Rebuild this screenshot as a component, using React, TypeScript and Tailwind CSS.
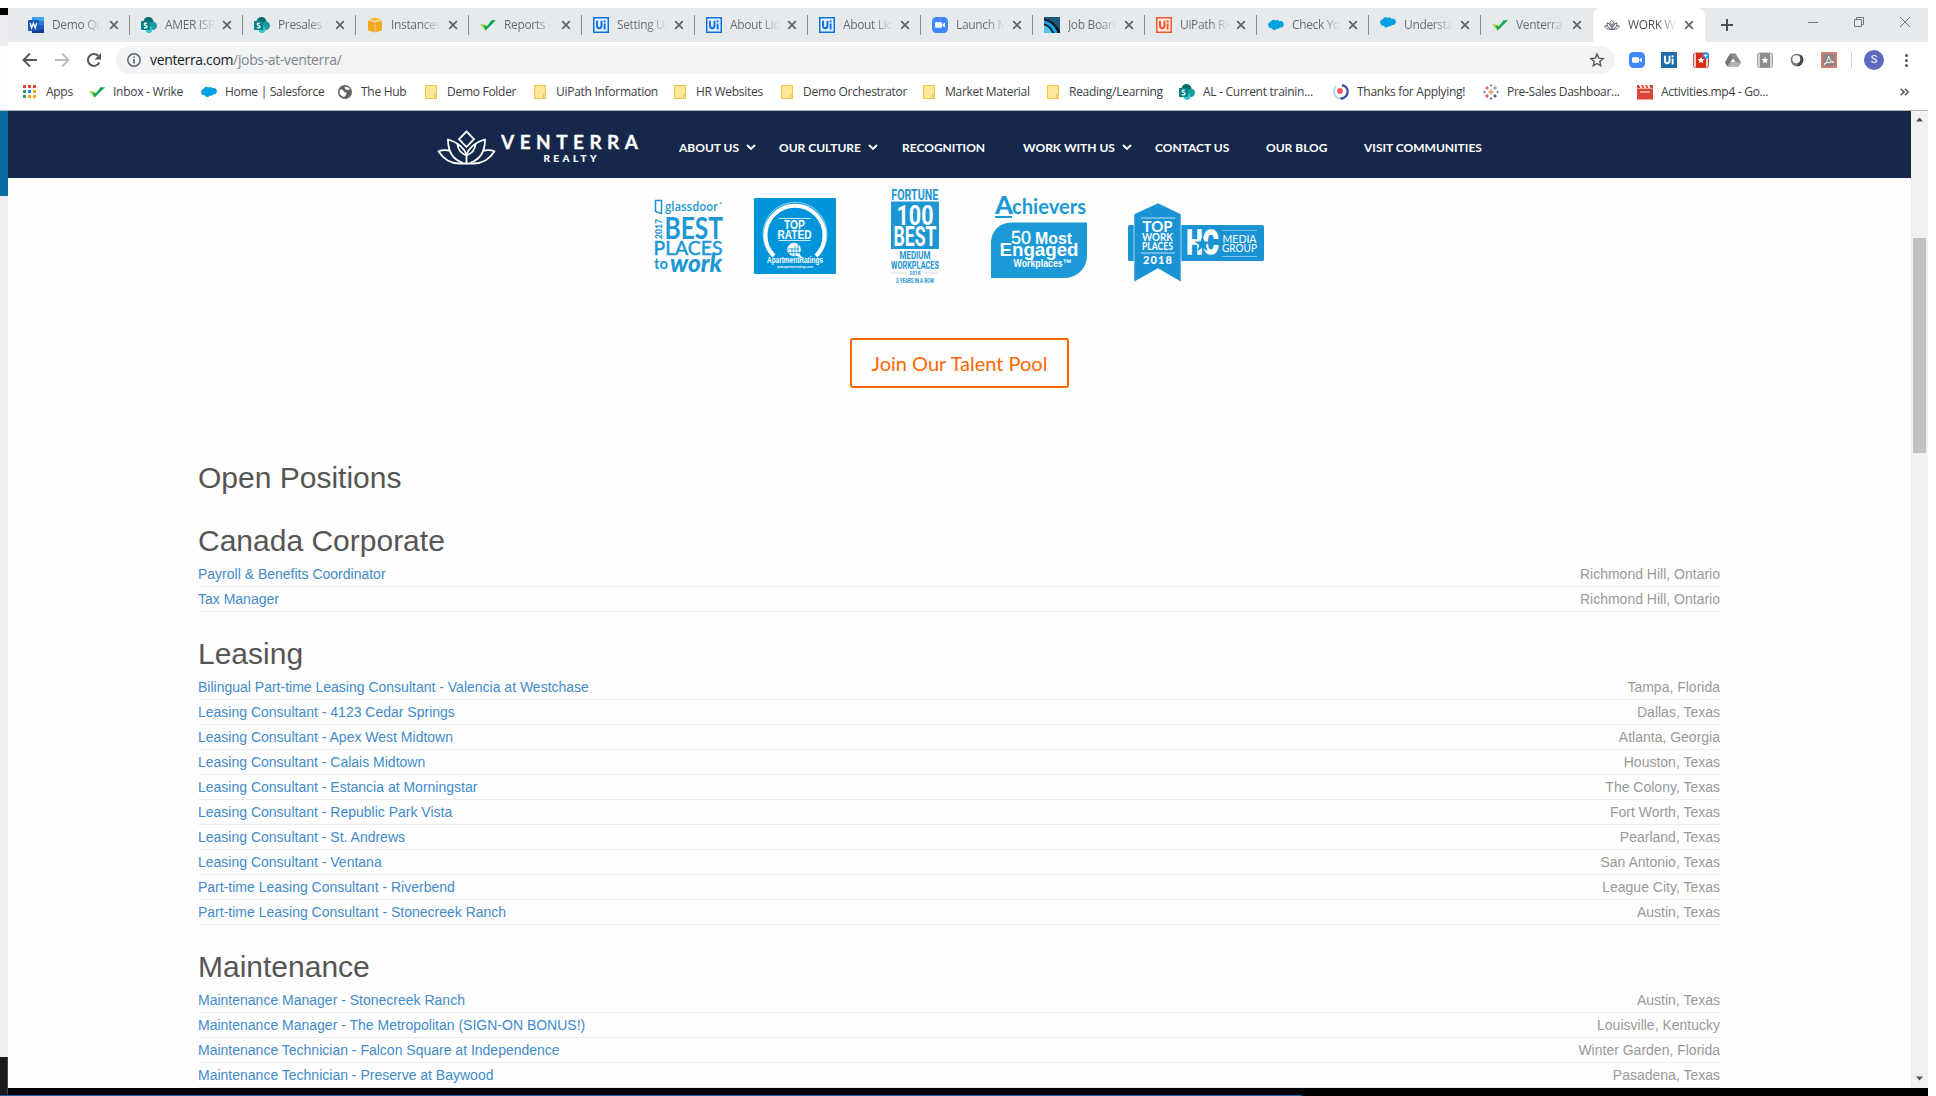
import React from "react";

const UI = "font-['Open_Sans','Noto_Sans',sans-serif]";

/* ---------- small icons ---------- */

const WordIcon = () => (
  <svg width="16" height="16" viewBox="0 0 16 16">
    <path fill="#41a5ee" d="M4 0h12v4H4z" />
    <path fill="#2b7cd3" d="M4 4h12v4H4z" />
    <path fill="#185abd" d="M4 8h12v4H4z" />
    <path fill="#103f91" d="M4 12h12v4H4z" />
    <rect x="0" y="3" width="11" height="11" rx="1" fill="#185abd" />
    <path d="M2.2 6l1.4 5 1.8-4.8L7.2 11l1.5-5" fill="none" stroke="#fff" strokeWidth="1.3" />
  </svg>
);

const SharePointIcon = () => (
  <svg width="16" height="16" viewBox="0 0 16 16">
    <circle cx="7.5" cy="5" r="5" fill="#036c70" />
    <circle cx="11.8" cy="8.8" r="4.2" fill="#1a9ba1" />
    <circle cx="8" cy="12.6" r="3.4" fill="#37c6d0" />
    <rect x="0" y="4" width="9" height="9" rx="0.8" fill="#038387" />
    <path d="M6 6.6C5 5.9 3.2 6 3.2 7.2c0 1.300 2.900 1 2.900 2.500 0 1.300-2 1.400-3.200.7" fill="none" stroke="#fff" strokeWidth="1.200" />
  </svg>
);

const BoxIcon = () => (
  <svg width="16" height="16" viewBox="0 0 16 16">
    <path fill="#f6a81f" d="M1 3.500L7.700 5v10.500L1 13.500zM15 3.500L8.300 5v10.500l6.700-2z" />
    <path fill="#f8b93c" d="M8 .6l6.500 1.900L8 4.200 1.500 2.500z" />
    <path d="M1 3.200L8 4.800l7-1.600" stroke="#fbdc9d" strokeWidth=".7" fill="none" />
  </svg>
);

const WrikeIcon = () => (
  <svg width="16" height="16" viewBox="0 0 16 16">
    <path fill="#a4d13a" d="M0 7.200l4.500.4 3.200 3.600-2.200 2.300z" />
    <path fill="#08a850" d="M16 3.200h-4.500L6.800 9.500 5.200 8.200 4 9l1.500 4.500z" />
  </svg>
);

const UiIcon = ({ kind }: { kind: "blue" | "orange" | "solid" }) => {
  const c = kind === "orange" ? "#f9562b" : kind === "blue" ? "#0f6fde" : "#1f6bb0";
  return (
    <svg width="16" height="16" viewBox="0 0 16 16">
      <rect width="16" height="16" fill={c} />
      {kind !== "solid" && <rect x="1.500" y="1.500" width="13" height="13" fill={kind === "orange" ? "#ffe9e2" : "#e6f1fd"} />}
      <path
        d="M4 3.800v5c0 3.200 4.500 3.200 4.500 0v-5M11.600 6.500v6"
        fill="none"
        stroke={kind === "solid" ? "#fff" : c}
        strokeWidth="1.900"
      />
      <rect x="10.600" y="3.400" width="2" height="1.900" fill={kind === "solid" ? "#fff" : c} />
    </svg>
  );
};

const ZoomIcon = () => (
  <svg width="16" height="16" viewBox="0 0 16 16">
    <rect width="16" height="16" rx="4.500" fill="#4087fc" />
    <rect x="3" y="5.200" width="7" height="5.600" rx="1.200" fill="#fff" />
    <path d="M10.500 7.300L13 5.400v5.200l-2.500-1.900z" fill="#fff" />
  </svg>
);

const JobBoardIcon = () => (
  <svg width="16" height="16" viewBox="0 0 16 16">
    <rect width="16" height="16" fill="#1c5878" />
    <path d="M0 1.500C8 3 13 8 16 14v2H0z" fill="#111c2a" />
    <path d="M0 3.500C7 5 11.500 10 13.500 16H0z" fill="#1ca4e8" />
    <path d="M0 6.500C5 7.500 8.500 11.500 10 16H8C6.500 12.500 4 9.500 0 8.500z" fill="#111c2a" />
    <path d="M0 8.500c4 1 6.500 4 8 7.500H0z" fill="#56c5f5" />
  </svg>
);

const CloudIcon = ({ up = false }: { up?: boolean }) => (
  <svg width="16" height="16" viewBox="0 0 16 16">
    <path
      transform={up ? "translate(0 -2.500)" : undefined}
      fill="#00a1e0"
      d="M3.200 4c1-1.400 3-1.500 4.100-.4 1-1 3.100-1 4 .6 2-.8 4.600.5 4.600 3 0 2.300-2 3.600-4 3.200-.8 1.400-2.300 1.600-3.300 1C7.600 13.800 4.700 13.600 3.900 11.200 1.800 11.500.1 10 .1 7.900c0-1.700 1-2.700 2.200-3z"
    />
  </svg>
);

const Lotus = ({ w, h, color, sw }: { w: number; h: number; color: string; sw: number }) => (
  <svg width={w} height={h} viewBox="0 0 59 35">
    <g fill="none" stroke={color} strokeWidth={sw} strokeLinejoin="round" strokeLinecap="round">
      <path d="M29.500 1.500L37 9.200 29.500 17 22 9.200z" />
      <path d="M29.500 33.500V24.500C28 20 22 12.500 11 9.500c0 9 3 19 14 23" />
      <path d="M29.500 24.500C31 20 37 12.500 48 9.500c0 9-3 19-14 23" />
      <path d="M20.500 14.500c.5 5 4 9 9 11 5-2 8.500-6 9-11" />
      <path d="M11.800 20.500C8 20 4 20.300 1.500 21.300c5 8 11 12.200 21 12.200h14c10 0 16-4.200 21-12.200-2.500-1-6.500-1.300-10.300-.8" />
    </g>
  </svg>
);

const FolderIcon = () => (
  <svg width="16" height="16" viewBox="0 0 16 16">
    <path d="M2.500 1.500h11v13h-11z" fill="#ffe79a" stroke="#ecc54c" />
    <path d="M11.500 14.500v-4h2v4z" fill="#ffe79a" stroke="#ecc54c" />
  </svg>
);

const AppsIcon = () => (
  <svg width="16" height="16" viewBox="0 0 16 16">
    {["#ea4335", "#ea4335", "#ea4335", "#34a05f", "#1a85ff", "#f6a609", "#34a05f", "#f6a609", "#f6a609"].map((c, i) => (
      <rect key={i} x={1 + (i % 3) * 5} y={1 + Math.floor(i / 3) * 5} width="3" height="3" fill={c} />
    ))}
  </svg>
);

const GlobeIcon = () => (
  <svg width="16" height="16" viewBox="0 0 16 16">
    <circle cx="8" cy="8" r="7" fill="#5f6368" />
    <path d="M3 5.500c2-.3 3.500.4 3.500 1.600S9 8 9.500 9.200 8 11.500 7.500 13c-2.800 0-5-2.500-5-5.200zM8 2.800c2-.6 4 .8 4.900 2.400-1 .8-2.500 1.200-3.600.4S7 4 8 2.800z" fill="#fff" />
  </svg>
);

const TargetIcon = () => (
  <svg width="16" height="16" viewBox="0 0 16 16">
    <path d="M3 2.500C-1 7 1 14 8 14.500" fill="none" stroke="#a9dbe8" strokeWidth="2" />
    <path d="M9 1.200C17 2.500 16.500 13.500 7.500 14.800" fill="none" stroke="#3f51a3" strokeWidth="2.400" />
    <circle cx="7" cy="7" r="3" fill="#ff5468" />
  </svg>
);

const TableauIcon = () => (
  <svg width="16" height="16" viewBox="0 0 16 16">
    <g strokeWidth="1.100" fill="none">
      <path d="M8 5.300v5.400M5.300 8h5.400" stroke="#e8762d" />
      <path d="M4 2.200v3.600M2.200 4h3.600" stroke="#c9503f" />
      <path d="M12 2.200v3.600M10.200 4h3.600" stroke="#5b8db8" />
      <path d="M4 10.200v3.600M2.200 12h3.600" stroke="#c0334d" />
      <path d="M12 10.200v3.600M10.200 12h3.600" stroke="#1f447e" />
      <path d="M8 .2v2.600M6.700 1.500h2.600" stroke="#6b98a8" />
      <path d="M8 13.200v2.600M6.700 14.500h2.600" stroke="#59659a" />
      <path d="M1.500 6.700v2.600M.2 8h2.600M14.500 6.700v2.600M13.200 8h2.600" stroke="#7187b4" />
    </g>
  </svg>
);

const ClapIcon = () => (
  <svg width="16" height="16" viewBox="0 0 16 16">
    <path d="M0 4.500h16V15.500H0z" fill="#db4437" />
    <path d="M0 1h2l1.500 3H0zM4 1h2l1.500 3h-2zM8 1h2l1.500 3h-2zM12 1h4v3h-2.500z" fill="#db4437" />
    <path d="M3 8h10" stroke="#fff" strokeWidth="1" />
  </svg>
);

const BookIcon = ({ red = false }: { red?: boolean }) => (
  <svg width="16" height="16" viewBox="0 0 16 16">
    <rect x=".5" y="1" width="15" height="14.500" rx="2" fill={red ? "#e7d3cc" : "#d4d4d4"} stroke={red ? "#c9573f" : "#a6a6a6"} />
    <rect x="3" y="1" width="10" height="14.500" fill={red ? "#dd2c10" : "#8d8d8d"} />
    <path d="M8 4.800l1 2.300 2.400.2-1.800 1.600.5 2.400L8 10l-2.100 1.300.5-2.400-1.800-1.600 2.400-.2z" fill="#fff" />
    {red && (
      <>
        <circle cx="12.700" cy="3.500" r="3.300" fill="#2a8be6" />
        <path d="M12.700 1.700v3.600M10.900 3.500h3.600" stroke="#fff" strokeWidth="1.200" />
      </>
    )}
  </svg>
);

const DriveIcon = () => (
  <svg width="16" height="16" viewBox="0 0 16 16">
    <path d="M5.300 1.500h5.200L16 10.500l-2.500 4h-11L0 10.500z" fill="#8b8b8b" />
    <path d="M5.300 1.500L8 6 2.500 14.500 0 10.500z" fill="#757575" />
    <path d="M5.500 10.300L8 6.200l2.500 4.100z" fill="#fff" />
    <path d="M5.200 10.300H16l-2.500 4.200h-11z" fill="#b0b0b0" />
  </svg>
);

const OrbIcon = () => (
  <svg width="16" height="16" viewBox="0 0 16 16">
    <circle cx="8" cy="8" r="6.300" fill="#777" />
    <path d="M8 14.300A6.300 6.300 0 0 0 14.300 8c0-2-.8-4-2.600-5.200z" fill="#444" />
    <circle cx="7.300" cy="7.300" r="4" fill="#f5f5f5" />
  </svg>
);

const PdfIcon = () => (
  <svg width="16" height="16" viewBox="0 0 16 16">
    <rect x=".75" y=".75" width="14.500" height="14.500" fill="#8e8684" stroke="#ec7a6c" strokeWidth="1.500" />
    <path d="M3 12.500c2-1 4.500-5 4.700-8.500.8 3.500 2.800 6.200 5.300 6.200-3.500-.4-7 .2-10 2.300z" fill="none" stroke="#fff" strokeWidth="1" />
  </svg>
);

const Close = () => (
  <svg width="10" height="10" viewBox="0 0 10 10">
    <path d="M1.200 1.200l7.600 7.600M8.800 1.200L1.200 8.800" stroke="#5f6368" strokeWidth="1.700" />
  </svg>
);

/* ---------- browser chrome ---------- */

type TabData = { icon: React.ReactNode; label: string; narrow?: boolean; sep?: boolean };

const tabs: TabData[] = [
  { icon: <WordIcon />, label: "Demo Quest", sep: true },
  { icon: <SharePointIcon />, label: "AMER ISR T", sep: true },
  { icon: <SharePointIcon />, label: "Presales Co", sep: true },
  { icon: <BoxIcon />, label: "Instances |", sep: true },
  { icon: <WrikeIcon />, label: "Reports - W", sep: true },
  { icon: <UiIcon kind="blue" />, label: "Setting Up", sep: true },
  { icon: <UiIcon kind="blue" />, label: "About Licen", sep: true },
  { icon: <UiIcon kind="blue" />, label: "About Licen", sep: true },
  { icon: <ZoomIcon />, label: "Launch Me", narrow: true, sep: true },
  { icon: <JobBoardIcon />, label: "Job Board", narrow: true, sep: true },
  { icon: <UiIcon kind="orange" />, label: "UiPath RPA", narrow: true, sep: true },
  { icon: <CloudIcon />, label: "Check You", narrow: true, sep: true },
  { icon: <CloudIcon up />, label: "Understand", narrow: true, sep: true },
  { icon: <WrikeIcon />, label: "Venterra R", narrow: true },
];

const TabBody = ({
  icon,
  label,
  narrow = false,
  active = false,
}: {
  icon: React.ReactNode;
  label: string;
  narrow?: boolean;
  active?: boolean;
}) => (
  <>
    <span className="shrink-0">{icon}</span>
    <span
      className={
        "ml-2 shrink-0 overflow-hidden bg-clip-text text-xs tracking-[-0.35px] whitespace-nowrap text-transparent " +
        (narrow ? "w-[49px] " : "w-[50px] ") +
        (active
          ? "bg-linear-to-r from-[#45494d] from-60% to-white"
          : "bg-linear-to-r from-[#65696d] from-60% to-[#e7eaed]")
      }
    >
      {label}
    </span>
    <span className="ml-[7px] shrink-0">
      <Close />
    </span>
  </>
);

const TabStrip = () => (
  <div className="flex h-[34px] items-center bg-[#e7eaed] pl-[9px]">
    {tabs.map((t, i) => (
      <div key={i} className={"relative flex h-full shrink-0 items-center pl-[11px] " + (t.narrow ? "w-[112px]" : "w-[113px]")}>
        <TabBody icon={t.icon} label={t.label} narrow={t.narrow} />
        {t.sep && <span className="absolute top-[7px] right-0 h-5 w-px bg-[#888c91]" />}
      </div>
    ))}
    <div className="flex h-full w-[112px] shrink-0 items-center rounded-t-lg bg-white pl-[11px]">
      <TabBody icon={<Lotus w={16} h={10} color="#38465f" sw={3} />} label="WORK WITH" narrow active />
    </div>
    <svg className="ml-4" width="12" height="12" viewBox="0 0 12 12">
      <path d="M6 0v12M0 6h12" stroke="#4d5156" strokeWidth="2" />
    </svg>
    <svg className="mt-[-6px] ml-auto" width="10" height="10" viewBox="0 0 10 10">
      <path d="M0 5.500h10" stroke="#777" />
    </svg>
    <svg className="mt-[-6px] ml-9" width="10" height="10" viewBox="0 0 10 10">
      <path d="M.5 2.500h7v7h-7zM2.500 2.500v-2h7v7h-2" fill="none" stroke="#777" />
    </svg>
    <svg className="mt-[-6px] mr-[18px] ml-9" width="10" height="10" viewBox="0 0 10 10">
      <path d="M0 0l10 10M10 0L0 10" stroke="#777" />
    </svg>
  </div>
);

const extensions: React.ReactNode[] = [
  <ZoomIcon />,
  <UiIcon kind="solid" />,
  <BookIcon red />,
  <DriveIcon />,
  <BookIcon />,
  <OrbIcon />,
  <PdfIcon />,
];

const Toolbar = () => (
  <div className="flex h-9 items-center pl-[14px]">
    <svg width="16" height="16" viewBox="0 0 16 16">
      <path d="M15 8H2M8 1.500L1.500 8 8 14.500" fill="none" stroke="#54585c" strokeWidth="1.900" />
    </svg>
    <svg className="ml-4" width="16" height="16" viewBox="0 0 16 16">
      <path d="M1 8h13M8 1.500L14.500 8 8 14.500" fill="none" stroke="#babcbe" strokeWidth="1.900" />
    </svg>
    <svg className="ml-4" width="16" height="16" viewBox="0 0 16 16">
      <path d="M13.300 10.500A6 6 0 1 1 12.300 3.800" fill="none" stroke="#54585c" strokeWidth="2" />
      <path d="M15 1v6.500H8.500z" fill="#54585c" />
    </svg>
    <div className="ml-[14px] flex h-7 w-[1499px] items-center rounded-full bg-[#f1f3f4] pr-[10px] pl-[11px]">
      <svg width="14" height="14" viewBox="0 0 14 14">
        <circle cx="7" cy="7" r="6.200" fill="none" stroke="#5f6368" strokeWidth="1.500" />
        <path d="M7 6v4.500M7 3.500v1.600" stroke="#5f6368" strokeWidth="1.600" />
      </svg>
      <span className="ml-[9px] text-sm tracking-[-0.35px] text-[#202124]">
        venterra.com<span className="text-[#80868b]">/jobs-at-venterra/</span>
      </span>
      <svg className="ml-auto" width="16" height="16" viewBox="0 0 16 16">
        <path d="M8 2l1.700 4.100 4.500.4-3.400 2.900 1 4.400L8 11.500l-3.800 2.300 1-4.400L1.800 6.500l4.500-.4z" fill="none" stroke="#54585c" strokeWidth="1.400" />
      </svg>
    </div>
    <div className="ml-[14px] flex gap-4">
      {extensions.map((e, i) => (
        <span key={i}>{e}</span>
      ))}
    </div>
    <span className="ml-[14px] h-4 w-px bg-[#cfd1d4]" />
    <span className="ml-3 flex size-5 items-center justify-center rounded-full bg-[#5c6bc0] font-[Roboto,sans-serif] text-[11px] text-white">S</span>
    <span className="ml-[21px] flex flex-col gap-[2px]">
      <i className="size-[3px] rounded-full bg-[#54585c]" />
      <i className="size-[3px] rounded-full bg-[#54585c]" />
      <i className="size-[3px] rounded-full bg-[#54585c]" />
    </span>
  </div>
);

const bookmarks: { icon: React.ReactNode; label: string; w: string }[] = [
  { icon: <AppsIcon />, label: "Apps", w: "w-[67px]" },
  { icon: <WrikeIcon />, label: "Inbox - Wrike", w: "w-[112px]" },
  { icon: <CloudIcon />, label: "Home | Salesforce", w: "w-[136px]" },
  { icon: <GlobeIcon />, label: "The Hub", w: "w-[86px]" },
  { icon: <FolderIcon />, label: "Demo Folder", w: "w-[109px]" },
  { icon: <FolderIcon />, label: "UiPath Information", w: "w-[140px]" },
  { icon: <FolderIcon />, label: "HR Websites", w: "w-[107px]" },
  { icon: <FolderIcon />, label: "Demo Orchestrator", w: "w-[142px]" },
  { icon: <FolderIcon />, label: "Market Material", w: "w-[124px]" },
  { icon: <FolderIcon />, label: "Reading/Learning", w: "w-[134px]" },
  { icon: <SharePointIcon />, label: "AL - Current trainin...", w: "w-[154px]" },
  { icon: <TargetIcon />, label: "Thanks for Applying!", w: "w-[150px]" },
  { icon: <TableauIcon />, label: "Pre-Sales Dashboar...", w: "w-[154px]" },
  { icon: <ClapIcon />, label: "Activities.mp4 - Go...", w: "w-[150px]" },
];

const BookmarksBar = () => (
  <div className="flex h-[33px] items-center border-b border-[#b4b4b6] pb-[4px] pl-[14px]">
    {bookmarks.map((b) => (
      <div key={b.label} className={"flex shrink-0 items-center gap-2 text-xs tracking-[-0.28px] whitespace-nowrap text-[#3c4043] " + b.w}>
        <span className="shrink-0">{b.icon}</span>
        {b.label}
      </div>
    ))}
    <svg className="mr-[19px] ml-auto" width="9" height="8" viewBox="0 0 9 8">
      <path d="M.7.7L4 4 .7 7.300M5 .7L8.300 4 5 7.300" fill="none" stroke="#4d5156" strokeWidth="1.500" />
    </svg>
  </div>
);

/* ---------- site ---------- */

const navItems: { label: string; w: string; menu?: boolean }[] = [
  { label: "ABOUT US", w: "w-[100px]", menu: true },
  { label: "OUR CULTURE", w: "w-[123px]", menu: true },
  { label: "RECOGNITION", w: "w-[121px]" },
  { label: "WORK WITH US", w: "w-[132px]", menu: true },
  { label: "CONTACT US", w: "w-[111px]" },
  { label: "OUR BLOG", w: "w-[98px]" },
  { label: "VISIT COMMUNITIES", w: "w-[130px]" },
];

const SiteNav = () => (
  <div className="flex h-[67px] shrink-0 items-center bg-[#15284b] pt-[6px] pl-[429px] font-[Lato,sans-serif] text-white">
    <Lotus w={59} h={35} color="#fff" sw={1.8} />
    <svg className="ml-[5px]" width="140" height="32" viewBox="0 0 140 32" fill="#fff" fontWeight="700">
      <text x="0" y="17" fontSize="19" textLength="137" stroke="#fff" strokeWidth=".3">VENTERRA</text>
      <text x="42.500" y="30" fontSize="10" textLength="53" stroke="#fff" strokeWidth=".2">REALTY</text>
    </svg>
    <div className="ml-[38px] flex">
      {navItems.map((n) => (
        <div key={n.label} className={"flex items-center text-xs font-bold tracking-[0px] whitespace-nowrap " + n.w}>
          {n.label}
          {n.menu && (
            <svg className="ml-[7px]" width="10" height="7" viewBox="0 0 10 7">
              <path d="M1 1l4 4 4-4" fill="none" stroke="#fff" strokeWidth="1.900" />
            </svg>
          )}
        </div>
      ))}
    </div>
  </div>
);

const FIT = "spacingAndGlyphs";

const GlassdoorBadge = () => (
  <svg className="mt-[20px]" width="72" height="78" viewBox="0 0 72 78" fill="#1b97d5">
    <path d="M2.500 13.500v-11h6V15.500l-6-2z" fill="none" stroke="#1b97d5" strokeWidth="1.500" />
    <text x="12" y="13" fontSize="13" fontWeight="600" fontFamily="Open Sans" textLength="53" lengthAdjust={FIT}>glassdoor</text>
    <path d="M66.500 5h2.500" stroke="#1b97d5" />
    <text transform="translate(9 41) rotate(-90)" fontSize="10" fontWeight="900" fontFamily="Lato" textLength="20" lengthAdjust={FIT}>2017</text>
    <text x="11.500" y="40.500" fontSize="30" fontWeight="700" fontFamily="Lato" textLength="58.500" lengthAdjust={FIT}>BEST</text>
    <text x="0.500" y="57" fontSize="20" fontFamily="Lato" stroke="#1b97d5" strokeWidth=".5" textLength="69" lengthAdjust={FIT}>PLACES</text>
    <text x="1" y="70.500" fontSize="16" fontWeight="700" fontFamily="Lato" textLength="14" lengthAdjust={FIT}>to</text>
    <text x="17" y="74" fontSize="24" fontWeight="900" fontStyle="italic" fontFamily="Lato" textLength="52" lengthAdjust={FIT}>work</text>
  </svg>
);

const ApartmentBadge = () => (
  <svg className="mt-[20px] ml-[29px]" width="82" height="76" viewBox="0 0 82 76" fill="#fff" textAnchor="middle" fontFamily="Liberation Sans" fontWeight="700">
    <rect width="82" height="76" rx="1" fill="#0095da" />
    <path d="M20 58a29.500 29.500 0 1 1 42 0" fill="none" stroke="#fff" strokeWidth="4" />
    <path d="M17.500 58a32 32 0 1 1 47 0" fill="none" stroke="#fff" strokeWidth=".6" />
    <path d="M24.500 20.500h32M24.500 42.500h32" stroke="#fff" strokeWidth=".8" />
    <text x="40.500" y="30.500" fontSize="12" textLength="21" lengthAdjust={FIT}>TOP</text>
    <text x="40.500" y="41" fontSize="13" textLength="34" lengthAdjust={FIT}>RATED</text>
    <circle cx="40" cy="51.500" r="6.800" fill="#fff" />
    <path d="M45 55l3 4.500-6-1.500z" />
    <path d="M35 54v3M38 50v7.500M41 48v10M44 46v10M34 51h11M35 54.500h11" stroke="#0095da" strokeWidth=".8" />
    <text x="41" y="65" fontSize="8.500" textLength="56" lengthAdjust={FIT}>ApartmentRatings</text>
    <text x="41" y="70" fontSize="3.500" textLength="36" lengthAdjust={FIT}>www.apartmentratings.com</text>
  </svg>
);

const FortuneBadge = () => (
  <svg className="mt-[10px] ml-[54px]" width="52" height="96" viewBox="0 0 52 96" fill="#1e96d3" textAnchor="middle" fontFamily="Roboto" fontWeight="700">
    <text x="24.800" y="11.500" fontSize="15" textLength="47" lengthAdjust={FIT}>FORTUNE</text>
    <rect x="1" y="13.500" width="48" height="47.500" />
    <g fill="#fff">
      <text x="25" y="37" fontSize="28" textLength="37" lengthAdjust={FIT}>100</text>
      <text x="25" y="58" fontSize="27" textLength="43" lengthAdjust={FIT}>BEST</text>
    </g>
    <text x="25" y="71" fontSize="10.500" textLength="31" lengthAdjust={FIT}>MEDIUM</text>
    <text x="25" y="80.700" fontSize="11" textLength="48" lengthAdjust={FIT}>WORKPLACES</text>
    <path d="M1 85h16M33 85h16" stroke="#ececec" strokeWidth="2" />
    <text x="25" y="87.300" fontSize="6" textLength="11" lengthAdjust={FIT}>2018</text>
    <text x="25" y="94.700" fontSize="7.200" textLength="38" lengthAdjust={FIT}>3 YEARS IN A ROW</text>
  </svg>
);

const AchieversBadge = () => (
  <svg className="mt-[16px] ml-[49px]" width="96" height="84" viewBox="0 0 96 84" fill="#1b9ad7" fontFamily="Liberation Sans">
    <text x="4" y="19.500" fontSize="24" fontWeight="900" fontFamily="Lato" textLength="18" lengthAdjust={FIT}>A</text>
    <text x="21" y="19.500" fontSize="21.500" fontWeight="700" fontFamily="Lato" textLength="74" lengthAdjust={FIT}>chievers</text>
    <path d="M4 23h17" stroke="#1b9ad7" strokeWidth="2" />
    <path d="M20 28.500h76V62a22 22 0 0 1-22 22H0V48.500a20 20 0 0 1 20-20z" />
    <g fill="#fff">
      <text x="20" y="50" fontSize="17.500" stroke="#fff" strokeWidth=".3" textLength="20" lengthAdjust={FIT}>50</text>
      <text x="44" y="50" fontSize="17" fontWeight="700" textLength="37" lengthAdjust={FIT}>Most</text>
      <text x="8.500" y="62" fontSize="18.500" fontWeight="700" textLength="79" lengthAdjust={FIT}>Engaged</text>
      <text x="22.500" y="73" fontSize="11" fontWeight="700" textLength="58" lengthAdjust={FIT}>Workplaces™</text>
    </g>
  </svg>
);

const TopWorkBadge = () => (
  <svg className="mt-[25px] ml-[41px]" width="136" height="80" viewBox="0 0 136 80" fill="#1a93d4" fontFamily="Lato">
    <rect x="0" y="22" width="136" height="36" rx="1.500" />
    <path d="M6 11L30 0l23 11v68L30 65.500 6 79z" stroke="#fff" strokeWidth=".6" />
    <g fill="#fff" textAnchor="middle">
      <path d="M13 15h34M13 50h34" stroke="#bfe0f3" strokeWidth="1.200" />
      <text x="29.500" y="28.500" fontSize="15" fontWeight="700" textLength="30" lengthAdjust={FIT}>TOP</text>
      <text x="29.500" y="38" fontSize="10.500" fontWeight="700" textLength="31" lengthAdjust={FIT}>WORK</text>
      <text x="29.500" y="47" fontSize="11" fontWeight="700" textLength="31" lengthAdjust={FIT}>PLACES</text>
      <text x="29.500" y="60.500" fontSize="11" fontWeight="900" textLength="29">2018</text>
      <text x="66.500" y="51" fontSize="34" fontWeight="700" fontFamily="Roboto" stroke="#fff" strokeWidth="1.600" textLength="16" lengthAdjust={FIT}>H</text>
      <text x="82.500" y="51" fontSize="34" fontWeight="700" fontFamily="Roboto" stroke="#fff" strokeWidth="1.600" textLength="16" lengthAdjust={FIT}>C</text>
      <text x="111.500" y="39.500" fontSize="10.500" textLength="34" lengthAdjust={FIT}>MEDIA</text>
      <text x="111.500" y="48.500" fontSize="10.500" textLength="35" lengthAdjust={FIT}>GROUP</text>
      <path d="M94 27.500h35M94 53.500h35" stroke="#8ccbea" strokeWidth=".8" />
    </g>
    <path d="M74.500 33l2 5.500h6l-4.800 3.600 1.900 6.200-5.100-3.700-5.100 3.700 1.900-6.200-4.800-3.600h6z" />
  </svg>
);

const groups: { title: string; rows: [string, string][] }[] = [
  {
    title: "Canada Corporate",
    rows: [
      ["Payroll & Benefits Coordinator", "Richmond Hill, Ontario"],
      ["Tax Manager", "Richmond Hill, Ontario"],
    ],
  },
  {
    title: "Leasing",
    rows: [
      ["Bilingual Part-time Leasing Consultant - Valencia at Westchase", "Tampa, Florida"],
      ["Leasing Consultant - 4123 Cedar Springs", "Dallas, Texas"],
      ["Leasing Consultant - Apex West Midtown", "Atlanta, Georgia"],
      ["Leasing Consultant - Calais Midtown", "Houston, Texas"],
      ["Leasing Consultant - Estancia at Morningstar", "The Colony, Texas"],
      ["Leasing Consultant - Republic Park Vista", "Fort Worth, Texas"],
      ["Leasing Consultant - St. Andrews", "Pearland, Texas"],
      ["Leasing Consultant - Ventana", "San Antonio, Texas"],
      ["Part-time Leasing Consultant - Riverbend", "League City, Texas"],
      ["Part-time Leasing Consultant - Stonecreek Ranch", "Austin, Texas"],
    ],
  },
  {
    title: "Maintenance",
    rows: [
      ["Maintenance Manager - Stonecreek Ranch", "Austin, Texas"],
      ["Maintenance Manager - The Metropolitan (SIGN-ON BONUS!)", "Louisville, Kentucky"],
      ["Maintenance Technician - Falcon Square at Independence", "Winter Garden, Florida"],
      ["Maintenance Technician - Preserve at Baywood", "Pasadena, Texas"],
    ],
  },
];

const Heading = ({ children }: { children: React.ReactNode }) => (
  <h2 className="h-[63px] pt-[25px] text-[30px] leading-[33px] text-[#555]">{children}</h2>
);

const Page = () => (
  <div className="flex w-[1903px] flex-col overflow-hidden bg-[#fefefe]">
    <SiteNav />
    <div className="flex h-[160px] shrink-0 items-start pl-[645px]">
      <GlassdoorBadge />
      <ApartmentBadge />
      <FortuneBadge />
      <AchieversBadge />
      <TopWorkBadge />
    </div>
    <div className="flex h-[98px] shrink-0 items-start pl-[842px]">
      <button className="h-[50px] w-[219px] rounded-[3px] border-2 border-[#ff6600] font-[Lato,sans-serif] text-[20px] leading-none text-[#ff6600]">
        Join Our Talent Pool
      </button>
    </div>
    <div className="ml-[190px] w-[1522px] font-['Liberation_Sans',Arial,sans-serif]">
      <Heading>Open Positions</Heading>
      {groups.map((g) => (
        <section key={g.title}>
          <Heading>{g.title}</Heading>
          {g.rows.map(([job, place]) => (
            <div key={job} className="flex h-[25px] justify-between border-b border-[#eee] pt-[2px] text-sm leading-5">
              <a className="text-[#428bca]">{job}</a>
              <span className="text-[#999]">{place}</span>
            </div>
          ))}
        </section>
      ))}
    </div>
  </div>
);

const Scrollbar = () => (
  <div className="flex w-[17px] flex-col items-center bg-[#f1f1f1]">
    <svg className="mt-[6px]" width="7" height="5" viewBox="0 0 7 5">
      <path d="M0 4.500L3.500.5 7 4.500z" fill="#505050" />
    </svg>
    <div className="mt-[116px] h-[215px] w-[13px] bg-[#c1c1c1]" />
    <svg className="mt-auto mb-[7px]" width="7" height="5" viewBox="0 0 7 5">
      <path d="M0 .5L3.500 4.500 7 .5z" fill="#505050" />
    </svg>
  </div>
);

const Backdrop = () => (
  <div className="flex w-2 flex-col">
    <div className="mt-2 h-[7px] bg-black" />
    <div className="h-[31px] bg-[#ebebf1]" />
    <div className="h-[64px] bg-[#fdfdfe]" />
    <div className="h-px bg-[#b8b8b8]" />
    <div className="h-[85px] bg-[#056ba2]" />
    <div className="grow bg-[#efeef0]" />
    <div className="h-[38px] border-r border-[#444] bg-[#1c1c1e]" />
  </div>
);

export default function App() {
  return (
    <div className={"flex h-[1096px] w-[1936px] flex-col overflow-hidden bg-white " + UI}>
      <div className="flex grow">
        <Backdrop />
        <div className="flex w-[1920px] flex-col">
          <div className="mt-2 flex h-[1080px] flex-col overflow-hidden bg-white">
            <TabStrip />
            <Toolbar />
            <BookmarksBar />
            <div className="flex h-[977px]">
              <Page />
              <Scrollbar />
            </div>
          </div>
          <div className="h-[7px] bg-black" />
        </div>
      </div>
      <div className="flex h-px shrink-0">
        <div className="w-[1302px] bg-[#1a5fa8]" />
        <div className="w-[626px] bg-black" />
      </div>
    </div>
  );
}
